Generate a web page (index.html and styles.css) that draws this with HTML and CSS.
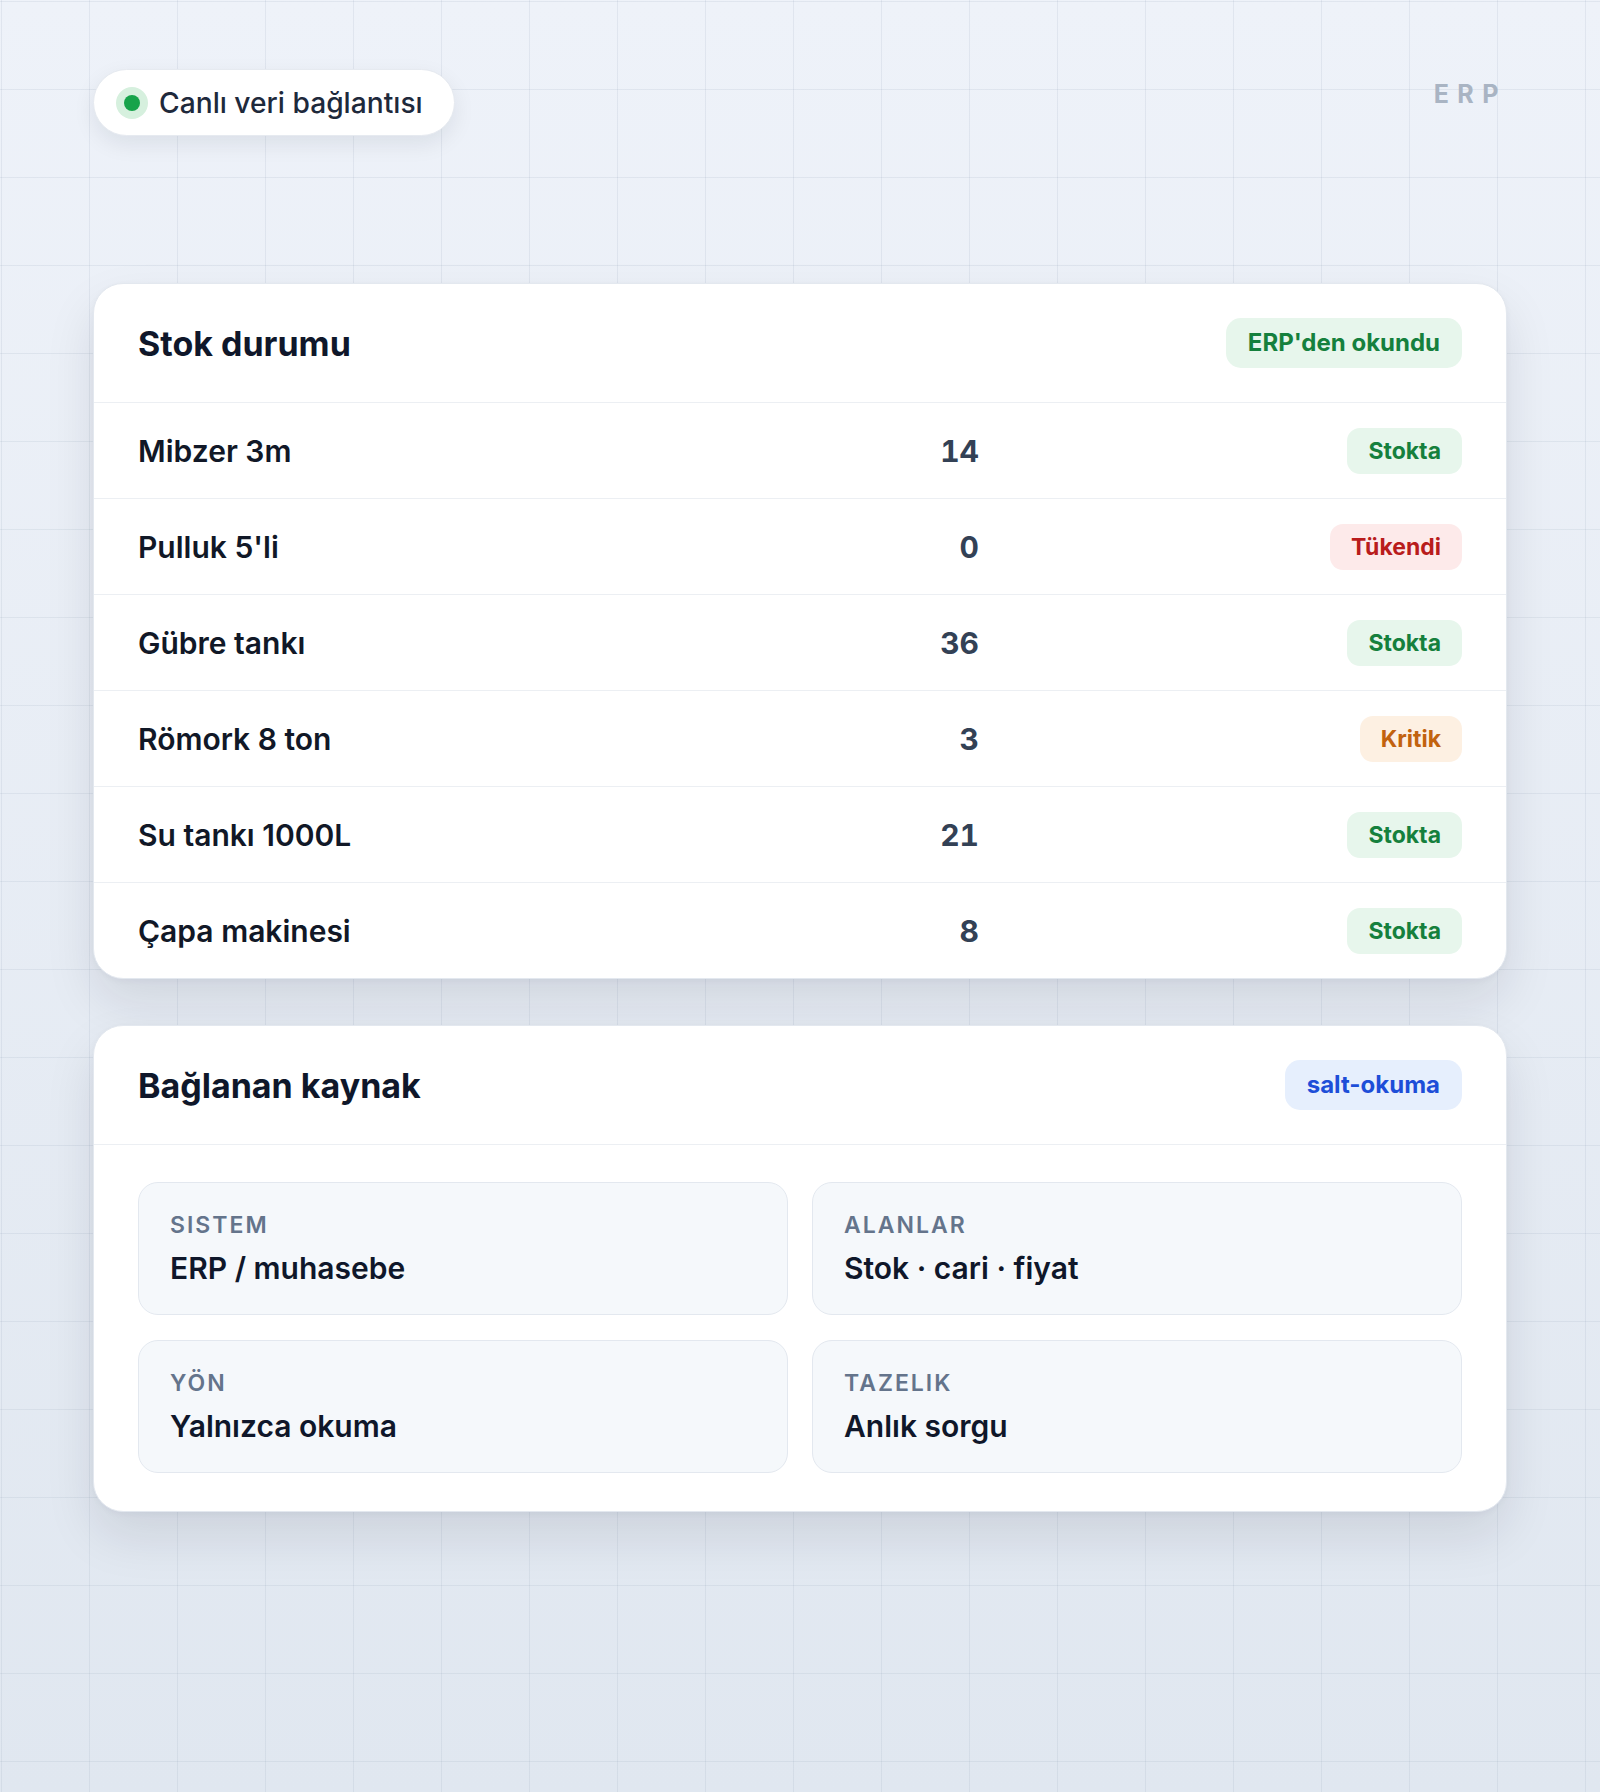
FILE: index.html
```html
<!DOCTYPE html>
<html lang="tr">
<head>
    <meta charset="UTF-8">
    <meta name="viewport" content="width=device-width, initial-scale=1.0">
    <title>Stok durumu</title>
    <link rel="stylesheet" href="styles.css">
</head>
<body>
    <div class="page">
        <div class="topbar">
            <div class="live-pill">
                <span class="live-dot"></span>
                <span>Canlı veri bağlantısı</span>
            </div>
            <span class="brand">ERP</span>
        </div>

        <div class="card">
            <div class="card-head">
                <h2>Stok durumu</h2>
                <span class="tag tag-green tag-lg">ERP'den okundu</span>
            </div>
            <div class="stock-row">
                <span class="item">Mibzer 3m</span>
                <span class="qty">14</span>
                <span class="status"><span class="tag tag-green">Stokta</span></span>
            </div>
            <div class="stock-row">
                <span class="item">Pulluk 5'li</span>
                <span class="qty">0</span>
                <span class="status"><span class="tag tag-red">Tükendi</span></span>
            </div>
            <div class="stock-row">
                <span class="item">Gübre tankı</span>
                <span class="qty">36</span>
                <span class="status"><span class="tag tag-green">Stokta</span></span>
            </div>
            <div class="stock-row">
                <span class="item">Römork 8 ton</span>
                <span class="qty">3</span>
                <span class="status"><span class="tag tag-orange">Kritik</span></span>
            </div>
            <div class="stock-row">
                <span class="item">Su tankı 1000L</span>
                <span class="qty">21</span>
                <span class="status"><span class="tag tag-green">Stokta</span></span>
            </div>
            <div class="stock-row">
                <span class="item">Çapa makinesi</span>
                <span class="qty">8</span>
                <span class="status"><span class="tag tag-green">Stokta</span></span>
            </div>
        </div>

        <div class="card">
            <div class="card-head">
                <h2>Bağlanan kaynak</h2>
                <span class="tag tag-blue tag-lg">salt-okuma</span>
            </div>
            <div class="source-grid">
                <div class="source-box">
                    <div class="source-label">SISTEM</div>
                    <div class="source-value">ERP / muhasebe</div>
                </div>
                <div class="source-box">
                    <div class="source-label">ALANLAR</div>
                    <div class="source-value">Stok · cari · fiyat</div>
                </div>
                <div class="source-box">
                    <div class="source-label">YÖN</div>
                    <div class="source-value">Yalnızca okuma</div>
                </div>
                <div class="source-box">
                    <div class="source-label">TAZELIK</div>
                    <div class="source-value">Anlık sorgu</div>
                </div>
            </div>
        </div>
    </div>
</body>
</html>
```

FILE: styles.css
```css
body {
    margin: 0;
    min-height: 1792px;
    font-family: Inter, "Noto Sans", sans-serif;
    color: #0f172a;
    background-color: #e8edf4;
    background-image:
        linear-gradient(to right, rgba(148, 163, 184, 0.16) 1px, transparent 1px),
        linear-gradient(to bottom, rgba(148, 163, 184, 0.16) 1px, transparent 1px),
        linear-gradient(#eef2f9, #e0e7f0);
    background-size: 88px 88px, 88px 88px, 100% 100%;
    background-position: 1px 1px, 1px 1px, 0 0;
}
.page {
    width: 1414px;
    margin: 0 auto;
    padding-top: 69px;
}
.topbar {
    display: flex;
    justify-content: space-between;
    align-items: flex-start;
    margin-bottom: 147px;
}
.live-pill {
    display: flex;
    align-items: center;
    gap: 19px;
    height: 67px;
    padding: 0 31px 0 30px;
    box-sizing: border-box;
    background: #ffffff;
    border: 1px solid #e6eaf0;
    border-radius: 34px;
    box-shadow: 0 8px 22px rgba(15, 23, 42, 0.08);
    font-size: 28.2px;
    font-weight: 500;
    color: #1e293b;
}
.live-dot {
    width: 16px;
    height: 16px;
    border-radius: 50%;
    background: #16a34a;
    box-shadow: 0 0 0 8px #d6f0de;
}
.brand {
    margin-top: 10px;
    font-size: 25px;
    font-weight: 700;
    letter-spacing: 8.5px;
    color: #a9b4c3;
}
.card {
    background: #ffffff;
    border: 1px solid #e3e8ef;
    border-radius: 30px;
    box-shadow: 0 24px 50px rgba(15, 23, 42, 0.10), 0 2px 6px rgba(15, 23, 42, 0.04);
    overflow: hidden;
    margin-bottom: 46px;
}
.card-head {
    display: flex;
    justify-content: space-between;
    align-items: center;
    height: 118px;
    padding: 0 44px;
    border-bottom: 1px solid #eceff3;
}
.card-head h2 {
    margin: 0;
    font-size: 34px;
    font-weight: 700;
    color: #0f172a;
}
.stock-row {
    display: grid;
    grid-template-columns: 1fr 120px 483px;
    align-items: center;
    height: 95px;
    padding: 0 44px;
    border-bottom: 1px solid #eceff3;
}
.stock-row:last-child {
    border-bottom: none;
}
.item {
    font-size: 30px;
    font-weight: 600;
    color: #111827;
}
.qty {
    text-align: right;
    font-size: 30px;
    font-weight: 700;
    font-variant-numeric: tabular-nums;
    color: #334155;
}
.status {
    text-align: right;
}
.tag {
    display: inline-block;
    padding: 9px 21px;
    border-radius: 13px;
    font-size: 23px;
    font-weight: 700;
    line-height: 28px;
}
.tag-lg {
    padding: 11px 22px;
    border-radius: 15px;
    font-size: 24px;
}
.tag-green {
    background: #e7f6ec;
    color: #15803d;
}
.tag-red {
    background: #fdeaea;
    color: #b91c1c;
}
.tag-orange {
    background: #fdf0e2;
    color: #c2620e;
}
.tag-blue {
    background: #e6effd;
    color: #1d4ed8;
}
.source-grid {
    display: grid;
    grid-template-columns: 1fr 1fr;
    gap: 25px 24px;
    padding: 37px 44px 38px;
}
.source-box {
    height: 133px;
    box-sizing: border-box;
    padding: 28px 31px 0;
    background: #f5f8fb;
    border: 1px solid #e3e8ef;
    border-radius: 20px;
}
.source-label {
    font-size: 23px;
    font-weight: 600;
    letter-spacing: 2px;
    color: #64748b;
}
.source-value {
    margin-top: 11px;
    font-size: 30px;
    font-weight: 600;
    color: #0f172a;
}
```
